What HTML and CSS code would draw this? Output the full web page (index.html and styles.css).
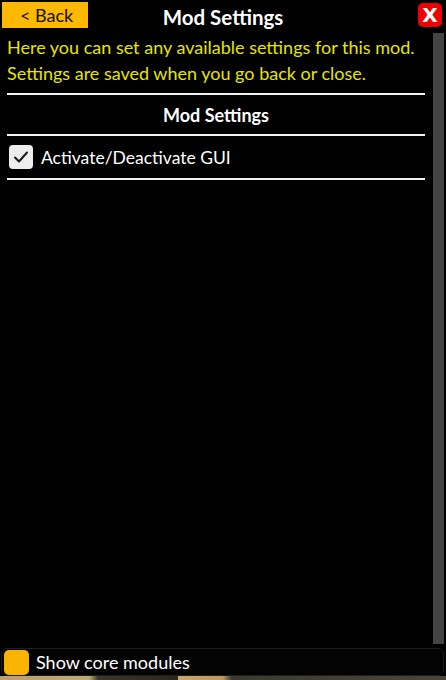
FILE: index.html
```html
<!DOCTYPE html>
<html>
<head>
<meta charset="utf-8">
<link rel="stylesheet" href="styles.css">
</head>
<body>
<div class="app">
  <header class="header">
    <div class="header-left"><button class="back">&lt; Back</button></div>
    <div class="title">Mod Settings</div>
    <div class="header-right"><button class="close">X</button></div>
  </header>
  <div class="main">
    <div class="content">
      <p class="desc">Here you can set any available settings for this mod.<br>Settings are saved when you go back or close.</p>
      <div class="section">Mod Settings</div>
      <label class="row">
        <span class="check">
          <svg width="16" height="14" viewBox="0 0 16 14"><path d="M2 7.5 L6 11.5 L14 2.5" fill="none" stroke="#1a1a1a" stroke-width="2" stroke-linecap="round" stroke-linejoin="round"/></svg>
        </span>
        <span class="row-label">Activate/Deactivate GUI</span>
      </label>
    </div>
    <div class="scrollbar"></div>
  </div>
  <footer class="footer">
    <span class="core-box"></span>
    <span class="core-label">Show core modules</span>
  </footer>
  <div class="ground"></div>
</div>
</body>
</html>
```
FILE: styles.css
```css
* { box-sizing: border-box; }
html, body { margin: 0; padding: 0; background: #000; }
body { font-family: Lato, "Noto Sans", sans-serif; }
.app {
  width: 446px;
  height: 680px;
  display: flex;
  flex-direction: column;
  background: #000;
}
.header {
  height: 32px;
  display: grid;
  grid-template-columns: 1fr auto 1fr;
  align-items: start;
  padding-top: 2px;
}
.header-right {
  display: flex;
  justify-content: flex-end;
}
.back {
  margin: 0 0 0 2px;
  width: 86px;
  height: 26px;
  background: #ffb800;
  border: none;
  border-radius: 0;
  font-family: inherit;
  font-size: 18px;
  color: #111;
  text-align: left;
  padding: 0 0 0 18px;
  line-height: 26px;
}
.title {
  text-align: center;
  color: #fff;
  font-weight: bold;
  font-size: 20.5px;
  line-height: 30px;
}
.close {
  margin: 1px 4px 0 0;
  width: 24px;
  height: 24px;
  background: #f00000;
  border: none;
  border-radius: 5px;
  color: #fff;
  font-family: "DejaVu Sans", sans-serif;
  font-weight: bold;
  font-size: 20px;
  line-height: 24px;
  padding: 0;
  text-align: center;
}
.main {
  flex: 1;
  display: flex;
  min-height: 0;
}
.content {
  width: 418px;
  margin-left: 7px;
}
.desc {
  margin: 2px 0 0 0;
  color: #e6e600;
  font-size: 18px;
  line-height: 26px;
  padding-bottom: 7px;
  border-bottom: 2px solid #f2f2f2;
  white-space: nowrap;
}
.section {
  color: #fff;
  font-weight: bold;
  font-size: 18px;
  text-align: center;
  height: 41px;
  line-height: 40px;
  border-bottom: 2px solid #f2f2f2;
}
.row {
  display: flex;
  align-items: center;
  height: 44px;
  border-bottom: 2px solid #f2f2f2;
}
.check {
  width: 24px;
  height: 24px;
  margin-left: 2px;
  background: #ededed;
  border-radius: 4px;
  display: flex;
  align-items: center;
  justify-content: center;
}
.row-label {
  color: #fff;
  font-size: 17.5px;
  margin-left: 8px;
}
.scrollbar {
  width: 11px;
  margin-left: 8px;
  margin-top: 1px;
  margin-bottom: 4px;
  background: #444;
}
.footer {
  height: 28px;
  margin: 0 2px 0 1px;
  border: 1px solid #1e1e1e;
  border-radius: 6px;
  display: flex;
  align-items: center;
  padding-left: 2px;
  background: #030303;
}
.core-box {
  width: 25px;
  height: 25px;
  background: #f8b400;
  border-radius: 5px;
}
.core-label {
  color: #fff;
  font-size: 18px;
  margin-left: 7px;
}
.ground {
  height: 4px;
  background: linear-gradient(90deg, #b8a070 0%, #c0a878 20%, #3a3528 22%, #2a2720 40%, #c8a870 40%, #b89860 50%, #3a3a30 52%, #4a4538 100%);
}
```
